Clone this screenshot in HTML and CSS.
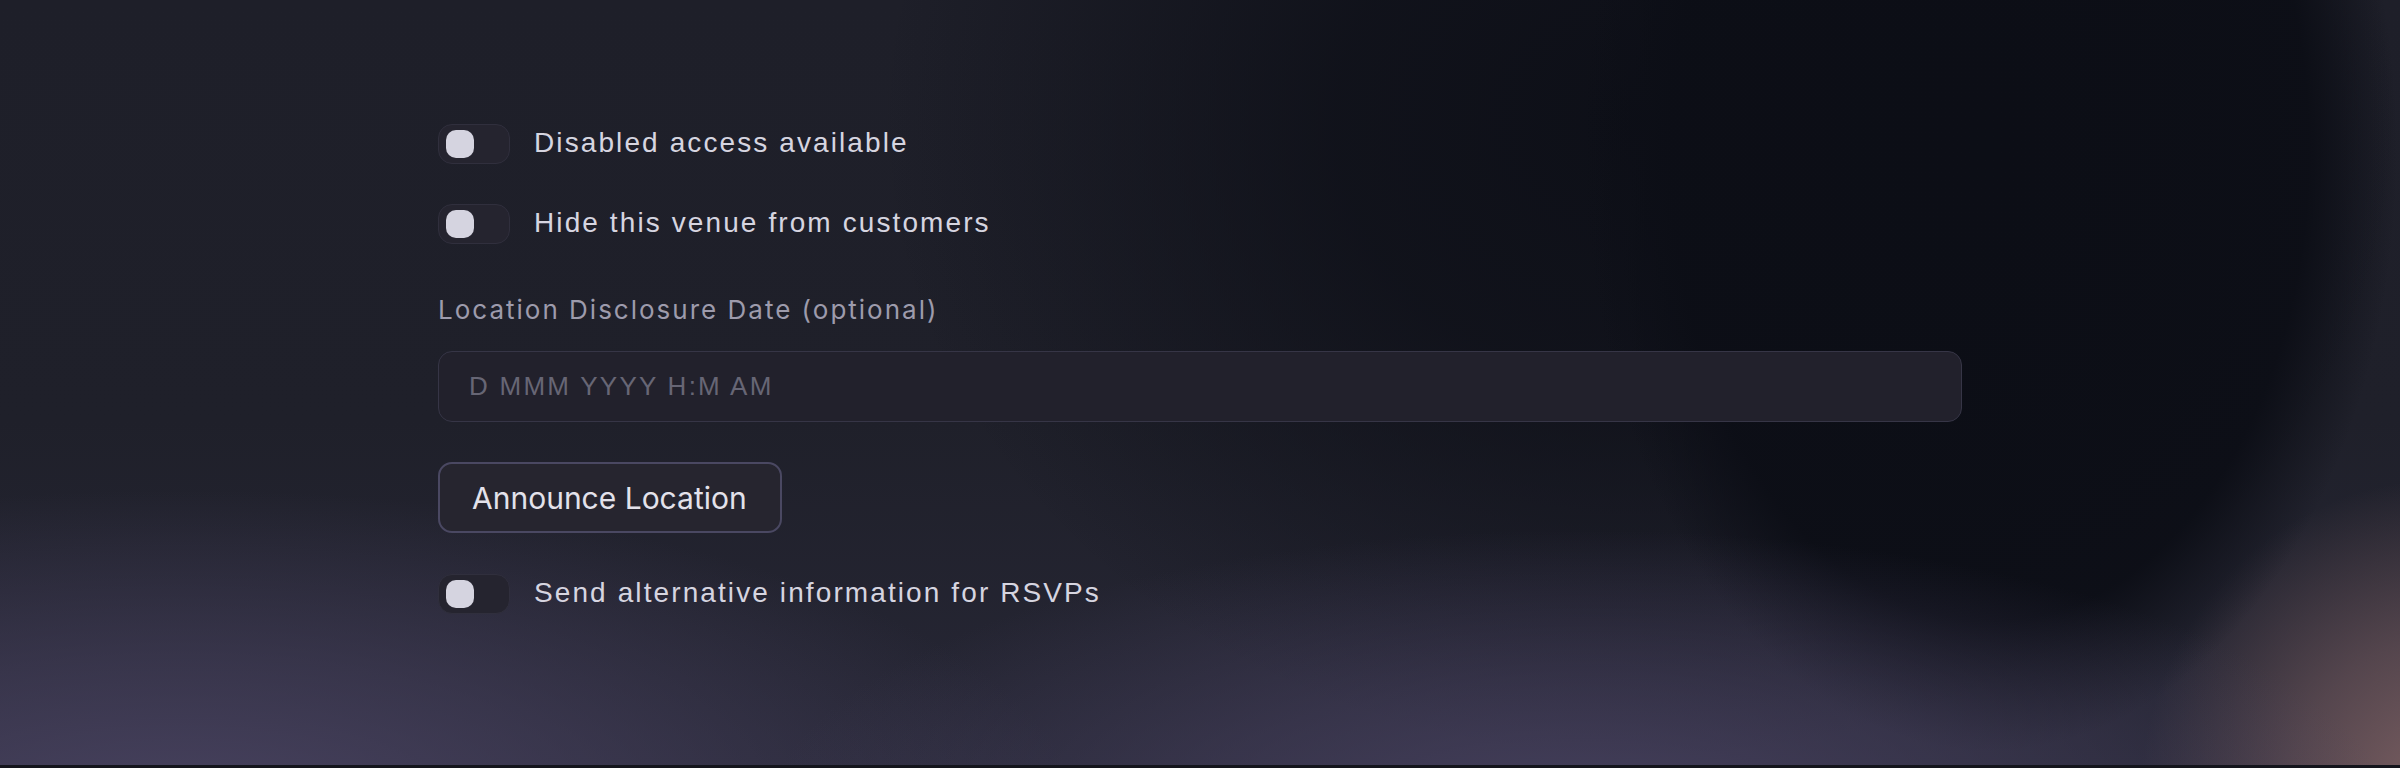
FILE: index.html
```html
<!DOCTYPE html>
<html lang="en">
<head>
<meta charset="utf-8">
<title>Venue settings</title>
<link rel="stylesheet" href="styles.css">
</head>
<body>
<div class="page">
  <form class="form">
    <label class="switch-row">
      <span class="switch"><span class="knob"></span></span>
      <span class="switch-text">Disabled access available</span>
    </label>
    <label class="switch-row">
      <span class="switch"><span class="knob"></span></span>
      <span class="switch-text">Hide this venue from customers</span>
    </label>
    <div class="field">
      <label class="field-label" for="disclosure">Location Disclosure Date (optional)</label>
      <input class="field-input" id="disclosure" type="text" placeholder="D MMM YYYY H:M AM">
    </div>
    <div class="actions">
      <button class="btn" type="button">Announce Location</button>
    </div>
    <label class="switch-row">
      <span class="switch"><span class="knob"></span></span>
      <span class="switch-text">Send alternative information for RSVPs</span>
    </label>
  </form>
</div>
</body>
</html>
```

FILE: styles.css
```css
html {
  background: #14151c;
}
body {
  margin: 0;
  height: 768px;
  overflow: hidden;
}
.page {
  height: 765px;
  box-sizing: border-box;
  padding-top: 124px;
  background:
    radial-gradient(ellipse 820px 300px at 1580px 830px, rgba(72, 66, 96, 0.95) 0%, rgba(72, 66, 96, 0.5) 50%, rgba(72, 66, 96, 0) 100%),
    radial-gradient(ellipse 900px 330px at 180px 820px, rgba(74, 68, 98, 0.95) 0%, rgba(74, 68, 98, 0.5) 50%, rgba(74, 68, 98, 0) 100%),
    radial-gradient(ellipse 420px 620px at 1990px 150px, rgba(12, 14, 22, 1) 0%, rgba(12, 14, 22, 0.95) 76%, rgba(12, 14, 22, 0) 97%),
    radial-gradient(ellipse 760px 640px at 1640px 120px, rgba(12, 14, 22, 0.92) 0%, rgba(12, 14, 22, 0.75) 40%, rgba(12, 14, 22, 0) 100%),
    radial-gradient(ellipse 300px 320px at 2440px 800px, rgba(124, 96, 98, 1) 0%, rgba(100, 80, 86, 0.75) 50%, rgba(100, 80, 86, 0) 100%),
    linear-gradient(180deg, #1e1f29 0%, #1f202a 55%, #272736 100%);
}
.form {
  width: 1524px;
  margin: 0 auto;
  display: flex;
  flex-direction: column;
  gap: 40px;
}
.switch-row {
  display: flex;
  align-items: center;
  gap: 24px;
  height: 40px;
  cursor: pointer;
}
.switch {
  box-sizing: border-box;
  width: 72px;
  height: 40px;
  border-radius: 14px;
  background: #25242f;
  border: 1px solid #302f3d;
  display: flex;
  align-items: center;
  padding-left: 7px;
  flex-shrink: 0;
}
.knob {
  width: 28px;
  height: 28px;
  border-radius: 10px;
  background: #d5d4e0;
}
.switch-text {
  font-family: "Liberation Sans", Arial, sans-serif;
  font-size: 28px;
  letter-spacing: 2.1px;
  color: #d6d5e0;
  line-height: 40px;
  margin-top: -2px;
}
.field {
  display: flex;
  flex-direction: column;
  margin-top: 6px;
}
.field-label {
  font-family: Inter, "Noto Sans", sans-serif;
  font-size: 26px;
  letter-spacing: 2px;
  line-height: 40px;
  color: #9d9bac;
  margin-bottom: 21px;
}
.field-input {
  box-sizing: border-box;
  width: 100%;
  height: 71px;
  border-radius: 14px;
  border: 1.5px solid #363546;
  background: #22212c;
  padding: 0 30px;
  font-family: "Liberation Sans", Arial, sans-serif;
  font-size: 26px;
  letter-spacing: 2.25px;
  color: #d6d5e0;
  outline: none;
}
.field-input::placeholder {
  color: #676675;
}
.actions {
  display: flex;
}
.btn {
  box-sizing: border-box;
  height: 71px;
  width: 344px;
  border-radius: 14px;
  border: 2px solid #4a4862;
  background: #26252f;
  color: #e3e2eb;
  font-family: Inter, "Noto Sans", sans-serif;
  font-size: 30px;
  padding: 0 32px;
  text-align: left;
  cursor: pointer;
  margin-bottom: 1px;
}
```
